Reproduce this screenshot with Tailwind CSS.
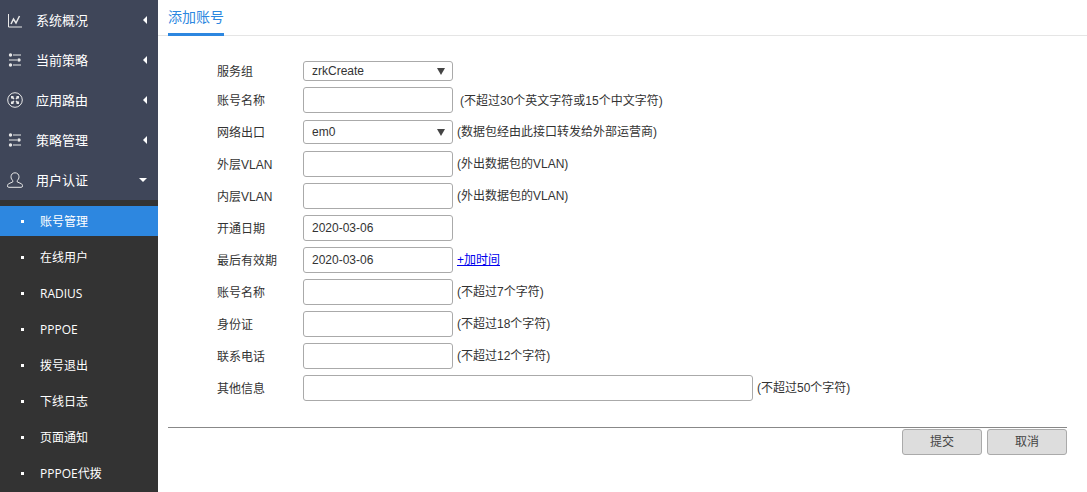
<!DOCTYPE html>
<html lang="zh-CN">
<head>
  <meta charset="UTF-8" />
  <title>添加账号</title>
  <script src="https://cdn.jsdelivr.net/npm/@tailwindcss/browser@4"></script>
</head>
<body class="h-[492px] w-[1087px] overflow-hidden bg-white font-['Liberation_Sans','Noto_Sans_CJK_SC',sans-serif] text-[12px] text-[#333]">
<div class="flex h-[492px]">

  <!-- Sidebar -->
  <aside class="h-full w-[158px] shrink-0 overflow-hidden bg-[#333] font-['Open_Sans','Noto_Sans_CJK_SC',sans-serif] text-white">
    <nav class="h-[200px] bg-[#3f4659] text-[13px]">
      <a class="flex h-10 items-center">
        <svg class="ml-[7px] w-4 h-4" viewBox="0 0 16 16" fill="none" stroke="#e8e8e8"><path d="M1.500 2v13H15"/><path d="M4 12l2.500-5 2.500 4 3.500-7" stroke-width="1.500"/></svg>
        <span class="ml-[13px] flex-1 pt-[2px]">系统概况</span>
        <span class="mr-[11px] h-0 w-0 border-y-[4px] border-r-[4px] border-y-transparent border-r-white"></span>
      </a>
      <a class="flex h-10 items-center">
        <svg class="ml-[7px] w-4 h-4" viewBox="0 0 16 16" fill="#e8e8e8"><circle cx="3.500" cy="3" r="1.700"/><rect x="6" y="2.500" width="8" height="1"/><circle cx="12" cy="8" r="1.700"/><rect x="2" y="7.500" width="8" height="1"/><circle cx="3.500" cy="13" r="1.700"/><rect x="6" y="12.500" width="8" height="1"/></svg>
        <span class="ml-[13px] flex-1 pt-[2px]">当前策略</span>
        <span class="mr-[11px] h-0 w-0 border-y-[4px] border-r-[4px] border-y-transparent border-r-white"></span>
      </a>
      <a class="flex h-10 items-center">
        <svg class="ml-[7px] w-4 h-4" viewBox="0 0 16 16" fill="none" stroke="#e8e8e8"><circle cx="8" cy="8" r="7.300"/><path d="M5 5l2 2M11 5L9 7M5 11l2-2M11 11L9 9" stroke-width="1.400"/><g fill="#e8e8e8" stroke="none"><rect x="4" y="4" width="2.500" height="2.500"/><rect x="9.500" y="4" width="2.500" height="2.500"/><rect x="4" y="9.500" width="2.500" height="2.500"/><rect x="9.500" y="9.500" width="2.500" height="2.500"/></g></svg>
        <span class="ml-[13px] flex-1 pt-[2px]">应用路由</span>
        <span class="mr-[11px] h-0 w-0 border-y-[4px] border-r-[4px] border-y-transparent border-r-white"></span>
      </a>
      <a class="flex h-10 items-center">
        <svg class="ml-[7px] w-4 h-4" viewBox="0 0 16 16" fill="#e8e8e8"><circle cx="3.500" cy="3" r="1.700"/><rect x="6" y="2.500" width="8" height="1"/><circle cx="12" cy="8" r="1.700"/><rect x="2" y="7.500" width="8" height="1"/><circle cx="3.500" cy="13" r="1.700"/><rect x="6" y="12.500" width="8" height="1"/></svg>
        <span class="ml-[13px] flex-1 pt-[2px]">策略管理</span>
        <span class="mr-[11px] h-0 w-0 border-y-[4px] border-r-[4px] border-y-transparent border-r-white"></span>
      </a>
      <a class="flex h-10 items-center">
        <svg class="ml-[7px] w-4 h-4" viewBox="0 0 16 16" fill="none" stroke="#e8e8e8"><path d="M8 .8c-2.400 0-4 1.700-4 4 0 1.700.8 3 1.800 3.800v1.300L1.800 11.700C.8 12.200.5 13 .5 14c0 .9.500 1.300 1.300 1.300h12.400c.8 0 1.300-.4 1.300-1.300 0-1-.3-1.800-1.300-2.300l-4-1.800V8.600c1-.8 1.800-2.100 1.800-3.800 0-2.300-1.600-4-4-4z"/></svg>
        <span class="ml-[13px] flex-1 pt-[2px]">用户认证</span>
        <span class="mr-[11px] h-0 w-0 border-x-[4px] border-t-[4px] border-x-transparent border-t-white"></span>
      </a>
    </nav>
    <ul class="pt-[6px] text-[12px]">
      <li class="flex h-[30px] items-center bg-[#2d87e0]"><i class="ml-[21px] h-[3px] w-[3px] bg-white"></i><span class="ml-[16px] pt-[2px]">账号管理</span></li>
      <li class="mt-[3px] flex h-[36px] items-center"><i class="ml-[21px] h-[3px] w-[3px] bg-white"></i><span class="ml-[16px] pt-[2px]">在线用户</span></li>
      <li class="flex h-[36px] items-center"><i class="ml-[21px] h-[3px] w-[3px] bg-white"></i><span class="ml-[16px] pt-[2px]">RADIUS</span></li>
      <li class="flex h-[36px] items-center"><i class="ml-[21px] h-[3px] w-[3px] bg-white"></i><span class="ml-[16px] pt-[2px]">PPPOE</span></li>
      <li class="flex h-[36px] items-center"><i class="ml-[21px] h-[3px] w-[3px] bg-white"></i><span class="ml-[16px] pt-[2px]">拨号退出</span></li>
      <li class="flex h-[36px] items-center"><i class="ml-[21px] h-[3px] w-[3px] bg-white"></i><span class="ml-[16px] pt-[2px]">下线日志</span></li>
      <li class="flex h-[36px] items-center"><i class="ml-[21px] h-[3px] w-[3px] bg-white"></i><span class="ml-[16px] pt-[2px]">页面通知</span></li>
      <li class="flex h-[36px] items-center"><i class="ml-[21px] h-[3px] w-[3px] bg-white"></i><span class="ml-[16px] pt-[2px]">PPPOE代拨</span></li>
    </ul>
  </aside>

  <!-- Main -->
  <main class="flex-1">
    <div class="h-[36px] border-b border-[#e5e5e5] pl-[10px]">
      <div class="h-[36px] w-[56px] border-b-[3px] border-[#2d87e0] pt-[7px] text-[14px] leading-[20px] text-[#2d87e0]">添加账号</div>
    </div>

    <form class="pl-[59px] pt-[25px]">
      <div class="flex h-[20px] items-center">
        <label class="w-[86px] pt-[2px]">服务组</label>
        <div class="flex h-[20px] w-[150px] items-center justify-between rounded-[3px] border border-[#aaa] pl-[8px] pr-[7px]"><span>zrkCreate</span><span class="h-0 w-0 border-x-[4px] border-t-[7px] border-x-transparent border-t-[#444]"></span></div>
      </div>
      <div class="mt-[6px] flex h-[26px] items-center">
        <label class="w-[86px] pt-[2px]">账号名称</label>
        <input class="h-[26px] w-[150px] rounded-[3px] border border-[#aaa]" />
        <span class="ml-[7px] pt-[2px]">(不超过30个英文字符或15个中文字符)</span>
      </div>
      <div class="mt-[7px] flex h-[24px] items-center">
        <label class="w-[86px] pt-[2px]">网络出口</label>
        <div class="flex h-[24px] w-[150px] items-center justify-between rounded-[3px] border border-[#aaa] pl-[8px] pr-[7px]"><span>em0</span><span class="h-0 w-0 border-x-[4px] border-t-[7px] border-x-transparent border-t-[#444]"></span></div>
        <span class="ml-[4px]">(数据包经由此接口转发给外部运营商)</span>
      </div>
      <div class="mt-[7px] flex h-[26px] items-center">
        <label class="w-[86px] pt-[2px]">外层VLAN</label>
        <input class="h-[26px] w-[150px] rounded-[3px] border border-[#aaa]" />
        <span class="ml-[4px]">(外出数据包的VLAN)</span>
      </div>
      <div class="mt-[6px] flex h-[26px] items-center">
        <label class="w-[86px] pt-[2px]">内层VLAN</label>
        <input class="h-[26px] w-[150px] rounded-[3px] border border-[#aaa]" />
        <span class="ml-[4px]">(外出数据包的VLAN)</span>
      </div>
      <div class="mt-[6px] flex h-[26px] items-center">
        <label class="w-[86px] pt-[2px]">开通日期</label>
        <input class="h-[26px] w-[150px] rounded-[3px] border border-[#aaa] pl-[8px]" value="2020-03-06" />
      </div>
      <div class="mt-[6px] flex h-[26px] items-center">
        <label class="w-[86px] pt-[2px]">最后有效期</label>
        <input class="h-[26px] w-[150px] rounded-[3px] border border-[#aaa] pl-[8px]" value="2020-03-06" />
        <a href="#" class="ml-[4px] text-[#0000ee] underline">+加时间</a>
      </div>
      <div class="mt-[6px] flex h-[26px] items-center">
        <label class="w-[86px] pt-[2px]">账号名称</label>
        <input class="h-[26px] w-[150px] rounded-[3px] border border-[#aaa]" />
        <span class="ml-[4px]">(不超过7个字符)</span>
      </div>
      <div class="mt-[6px] flex h-[26px] items-center">
        <label class="w-[86px] pt-[2px]">身份证</label>
        <input class="h-[26px] w-[150px] rounded-[3px] border border-[#aaa]" />
        <span class="ml-[4px]">(不超过18个字符)</span>
      </div>
      <div class="mt-[6px] flex h-[26px] items-center">
        <label class="w-[86px] pt-[2px]">联系电话</label>
        <input class="h-[26px] w-[150px] rounded-[3px] border border-[#aaa]" />
        <span class="ml-[4px]">(不超过12个字符)</span>
      </div>
      <div class="mt-[6px] flex h-[26px] items-center">
        <label class="w-[86px] pt-[2px]">其他信息</label>
        <input class="h-[26px] w-[450px] rounded-[3px] border border-[#aaa]" />
        <span class="ml-[4px]">(不超过50个字符)</span>
      </div>
    </form>

    <div class="ml-[10px] mr-[20px] mt-[26px] border-t border-[#888]">
      <div class="flex justify-end gap-[5px] pt-[1px]">
        <button class="h-[26px] w-[80px] rounded-[3px] border border-[#aaa] bg-[#ddd] text-[#444]">提交</button>
        <button class="h-[26px] w-[80px] rounded-[3px] border border-[#aaa] bg-[#ddd] text-[#444]">取消</button>
      </div>
    </div>
  </main>
</div>
</body>
</html>
